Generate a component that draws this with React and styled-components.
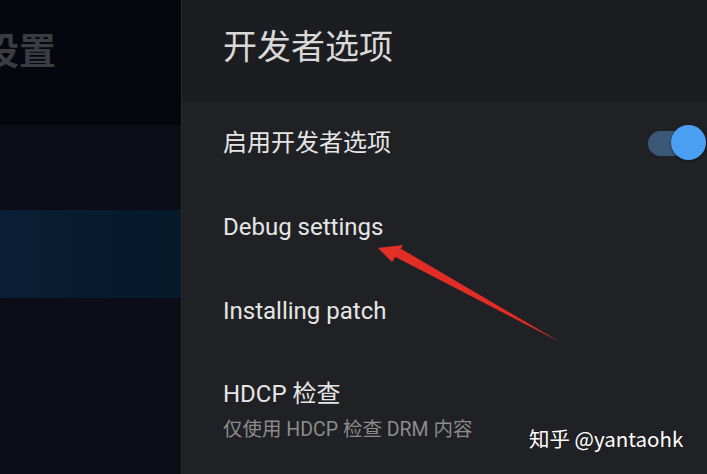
import React from "react";
import styled, { createGlobalStyle } from "styled-components";

const Global = createGlobalStyle`
  html, body { margin: 0; padding: 0; background: #202124; }
  body { font-family: Roboto, "Noto Sans CJK SC", sans-serif; }
  #root { width: 707px; height: 474px; overflow: hidden; }
`;

const Screen = styled.div`
  position: relative;
  display: flex;
  width: 707px;
  height: 474px;
  overflow: hidden;
`;

const Side = styled.aside`
  width: 181px;
  flex: none;
  display: flex;
  flex-direction: column;
  background: #0b0d16;
  overflow: hidden;
`;

const SideTitle = styled.div`
  height: 125px;
  flex: none;
  background: #05070f;
  padding-top: 26px;
  box-sizing: border-box;
  margin-left: -18px;
  font-family: "Noto Sans CJK SC", sans-serif;
  font-weight: 700;
  font-size: 37px;
  line-height: 46px;
  color: #3a3c41;
  white-space: nowrap;
`;

const SideRow = styled.div`
  height: ${(p) => p.$h}px;
  flex: none;
  background: ${(p) => (p.$active ? "linear-gradient(90deg, #0a1f35, #061a2e 70%, #071a2c)" : "#0c0d17")};
`;

const Main = styled.main`
  flex: 1;
  display: flex;
  flex-direction: column;
  background: #202124;
  border-left: 1px solid #2a2b2e;
`;

const Header = styled.header`
  height: 101px;
  flex: none;
  box-sizing: border-box;
  display: flex;
  align-items: center;
  padding: 0 0 12px 41px;
  background: #1c1d20;
  border-bottom: 1px solid #18191b;
  font-family: "Noto Sans CJK SC", sans-serif;
  font-size: 34px;
  color: #d9d9d9;
`;

const Row = styled.div`
  height: ${(p) => p.$h || 84}px;
  flex: none;
  box-sizing: border-box;
  display: flex;
  align-items: ${(p) => (p.$top ? "flex-start" : "center")};
  justify-content: space-between;
  padding: ${(p) => (p.$top ? "26px 0 0 41px" : "0 0 0 41px")};
`;

const TextCol = styled.div`
  display: flex;
  flex-direction: column;
`;

const Label = styled.div`
  font-family: Roboto, "Noto Sans CJK SC", sans-serif;
  font-size: 24px;
  line-height: 30px;
  color: #e6e6e6;
`;

const Sub = styled.div`
  font-family: Roboto, "Noto Sans CJK SC", sans-serif;
  font-size: 19.5px;
  line-height: 26px;
  margin-top: 8px;
  color: #8c8c8c;
`;

const Toggle = styled.div`
  position: relative;
  width: 58px;
  height: 40px;
  margin-right: 1px;
  flex: none;
`;

const Track = styled.div`
  position: absolute;
  left: 0;
  top: 8px;
  width: 44px;
  height: 25px;
  border-radius: 13px;
  background: #3c5877;
`;

const Thumb = styled.div`
  position: absolute;
  right: 0;
  top: 2px;
  width: 35px;
  height: 35px;
  border-radius: 50%;
  background: #4b9ff2;
  box-shadow: 0 1px 3px rgba(0, 0, 0, 0.5);
`;

const Watermark = styled.div`
  position: absolute;
  left: 529px;
  top: 424px;
  font-family: "Noto Sans CJK SC", sans-serif;
  font-size: 20.5px;
  line-height: 28px;
  color: #ffffff;
  white-space: nowrap;
`;

const Arrow = styled.svg`
  position: absolute;
  left: 0;
  top: 0;
  pointer-events: none;
`;

export default function App() {
  return (
    <>
      <Global />
      <Screen>
        <Side>
          <SideTitle>设置</SideTitle>
          <SideRow $h={85} />
          <SideRow $h={88} $active />
          <SideRow $h={176} />
        </Side>
        <Main>
          <Header>开发者选项</Header>
          <Row>
            <Label>启用开发者选项</Label>
            <Toggle>
              <Track />
              <Thumb />
            </Toggle>
          </Row>
          <Row>
            <Label>Debug settings</Label>
          </Row>
          <Row>
            <Label>Installing patch</Label>
          </Row>
          <Row $h={122} $top>
            <TextCol>
              <Label>HDCP 检查</Label>
              <Sub>仅使用 HDCP 检查 DRM 内容</Sub>
            </TextCol>
          </Row>
        </Main>
        <Arrow width="707" height="474" viewBox="0 0 707 474">
          <polygon points="378,248 560,342 398,247" fill="#e12d26" />
          <polygon points="378,248 403,245 392,262" fill="#e53028" />
        </Arrow>
        <Watermark>知乎 @yantaohk</Watermark>
      </Screen>
    </>
  );
}
